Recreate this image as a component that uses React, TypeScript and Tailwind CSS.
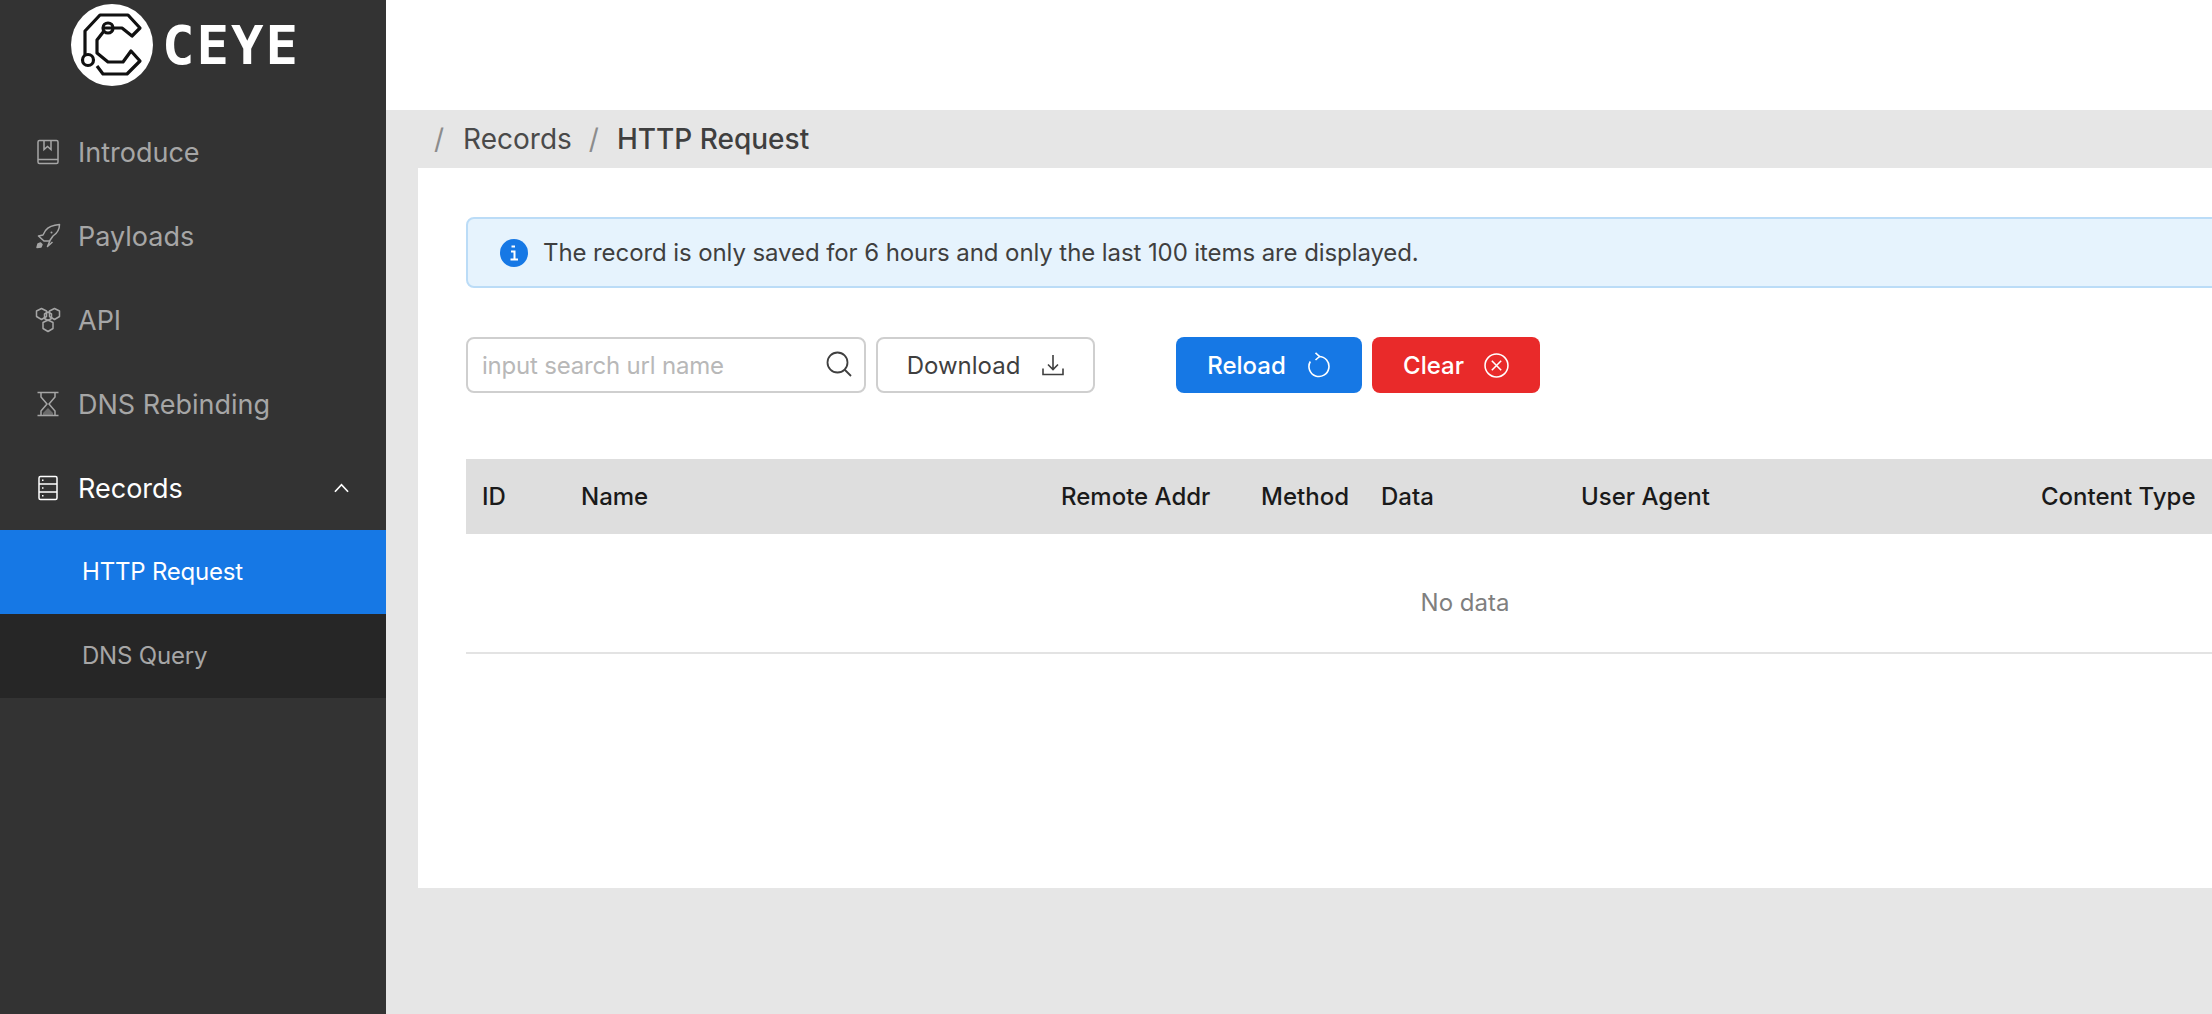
import { ReactNode } from "react";

const icon = "w-[26px] h-[26px] shrink-0";

function BookIcon() {
  return (
    <svg viewBox="0 0 26 26" className={icon} fill="none" stroke="currentColor" strokeWidth="1.5">
      <rect x="3" y="1.5" width="20" height="23" rx="1.5" />
      <path d="M3 20.5h20M9 1.5v9l3.5-3 3.5 3v-9" />
    </svg>
  );
}

function RocketIcon() {
  return (
    <svg viewBox="0 0 26 26" className={icon} fill="none" stroke="currentColor" strokeWidth="1.5" strokeLinejoin="round">
      <path d="M24.5 1.5C18 2 13.5 3.5 10.5 7.5L8 12 3.5 13l5.5 5 5.5 0 3.5-5C22.500 10 24.500 7 24.500 1.500Z" />
      <path d="M15 17.500 12.500 23.500 17.500 19" />
      <circle cx="16.500" cy="9.500" r="1" fill="currentColor" stroke="none" />
      <path d="M2 24.500l1-3.500 2.500-1 1.500 1.500-1 2.500Z" fill="currentColor" />
    </svg>
  );
}

function HexIcon() {
  return (
    <svg viewBox="0 0 26 26" className={icon} fill="none" stroke="currentColor" strokeWidth="1.500" strokeLinejoin="round">
      <path d="M6.500 1.500 11.500 4v5.500L6.500 12.500 1.500 9.500V4Z" />
      <path d="M19.500 1.500 24.500 4v5.500L19.500 12.500 14.500 9.500V4Z" />
      <path d="M13 13 18 15.500V21.500L13 24.500 8 21.500V15.500Z" />
      <path d="M13 5 16.500 7v4.500L13 13.500 9.500 11.500V7Z" />
    </svg>
  );
}

function HourglassIcon() {
  return (
    <svg viewBox="0 0 26 26" className={icon} fill="none" stroke="currentColor" strokeWidth="1.500">
      <path d="M2.500 1.500h21M2.500 24.500h21M6 1.500v4.500L12 13 6 20v4.500M20 1.500v4.500L14 13l6 7v4.500" />
      <path d="M8 22 13 17l5 5v2.500H8Z" fill="currentColor" fillOpacity="0.5" stroke="none" />
    </svg>
  );
}

function ServerIcon() {
  return (
    <svg viewBox="0 0 26 26" className={icon} fill="none" stroke="currentColor" strokeWidth="1.500">
      <rect x="4" y="1.500" width="18" height="23" rx="1.500" />
      <path d="M4 9h18M4 17h18" />
      <path d="M7 5.200h1.500M7 13h1.500M7 20.800h1.500" />
    </svg>
  );
}

function MenuItem({ label, children, active }: { label: string; children: ReactNode; active?: boolean }) {
  return (
    <div className={`flex items-center h-[84px] pl-[35px] text-[27px] ${active ? "text-white" : "text-[#a6a6a6]"}`}>
      {children}
      <span className="ml-[17px] pt-[2px]">{label}</span>
    </div>
  );
}

function Sidebar() {
  return (
    <aside className="w-[386px] shrink-0 bg-[#333333] flex flex-col">
      <div className="h-[110px] flex items-start pl-[71px] pt-[4px] gap-[9px]">
        <svg viewBox="0 0 82 82" className="w-[82px] h-[82px] shrink-0">
          <circle cx="41" cy="41" r="41" fill="#fff" />
          <g fill="none" stroke="#111" strokeWidth="3.200" strokeLinejoin="round">
            <path d="M33 24 H51 L61 32 69 24 57 11 H29 L14 27 V51" />
            <path d="M33 27 26 36 V49 L37 58 H52 L60 47 69 57 56 70 H32 L26 62" />
            <circle cx="37" cy="24" r="5" />
            <circle cx="17" cy="56" r="5.500" />
          </g>
        </svg>
        <span className="text-white text-[54px] leading-[84px] font-bold tracking-[2px] font-['DejaVu_Sans_Mono',monospace]">CEYE</span>
      </div>
      <MenuItem label="Introduce"><BookIcon /></MenuItem>
      <MenuItem label="Payloads"><RocketIcon /></MenuItem>
      <MenuItem label="API"><HexIcon /></MenuItem>
      <MenuItem label="DNS Rebinding"><HourglassIcon /></MenuItem>
      <div className="relative">
        <MenuItem label="Records" active><ServerIcon /></MenuItem>
        <svg viewBox="0 0 16 10" className="absolute left-[334px] top-[37px] w-[15px] h-[10px]" fill="none" stroke="#fff" strokeWidth="1.800">
          <path d="M1 9 8 1.500 15 9" />
        </svg>
      </div>
      <div className="h-[84px] flex items-center pl-[82px] bg-[#1678e5] text-white text-[24px] tracking-[-0.2px]">HTTP Request</div>
      <div className="h-[84px] flex items-center pl-[82px] bg-[#262626] text-[#a6a6a6] text-[24px] tracking-[-0.2px]">DNS Query</div>
    </aside>
  );
}

function Toolbar() {
  return (
    <div className="flex items-center mt-[49px] text-[24px]">
      <div className="relative w-[400px] h-[56px]">
        <input
          placeholder="input search url name"
          className="w-full h-full border-2 border-[#cfcfcf] rounded-[8px] pl-[14px] pr-[50px] pt-[1px] outline-none text-[24px] tracking-[-0.2px] placeholder:text-[#b8b8b8]"
        />
        <svg viewBox="0 0 26 26" className="absolute right-[14px] top-[14px] w-[26px] h-[26px]" fill="none" stroke="#3f3f3f" strokeWidth="1.800">
          <circle cx="11.500" cy="11.500" r="10" />
          <path d="M18.500 18.500 25 25" />
        </svg>
      </div>
      <button className="ml-[10px] w-[219px] h-[56px] border-2 border-[#cfcfcf] rounded-[8px] flex items-center justify-center gap-[22px] text-[#3f3f3f]">
        <span className="pt-[1px]">Download</span>
        <svg viewBox="0 0 22 22" className="w-[22px] h-[22px]" fill="none" stroke="#3f3f3f" strokeWidth="1.600">
          <path d="M11 1v14M6 10.500 11 15.500 16 10.500M1 14.500V20.500H21V14.500" />
        </svg>
      </button>
      <button className="ml-[81px] w-[186px] h-[56px] rounded-[8px] bg-[#1678e5] text-white font-medium flex items-center justify-center gap-[21px]">
        <span className="pt-[1px]">Reload</span>
        <svg viewBox="0 0 24 26" className="w-[24px] h-[26px]" fill="none" stroke="#fff" strokeWidth="1.600">
          <path d="M12 4.500a10 10 0 1 1-8.700 5" />
          <path d="M8.500 0.800 12.500 4.500 8.500 8" />
        </svg>
      </button>
      <button className="ml-[10px] w-[168px] h-[56px] rounded-[8px] bg-[#e92a2a] text-white font-medium flex items-center justify-center gap-[20px]">
        <span className="pt-[1px]">Clear</span>
        <svg viewBox="0 0 24 24" className="w-[25px] h-[25px]" fill="none" stroke="#fff" strokeWidth="1.500">
          <circle cx="12" cy="12" r="11" />
          <path d="M7.500 7.500 16.500 16.500M16.500 7.500 7.500 16.500" />
        </svg>
      </button>
    </div>
  );
}

const columns = ["ID", "Name", "Remote Addr", "Method", "Data", "User Agent", "Content Type"];

function RecordsTable() {
  return (
    <div className="w-[1998px] mt-[66px] text-[24px]">
      <div className="grid grid-cols-[99px_480px_200px_120px_200px_460px_1fr] h-[75px] items-center bg-[#dedede] font-medium text-[#1a1a1a]">
        {columns.map((c) => (
          <div key={c} className="pl-[16px] whitespace-nowrap">{c}</div>
        ))}
      </div>
      <div className="h-[120px] flex items-center justify-center pt-[19px] border-b-2 border-[#e3e3e3] text-[#7f7f7f]">No data</div>
    </div>
  );
}

export default function App() {
  return (
    <div className="flex w-[2212px] h-[1014px] overflow-hidden bg-[#e6e6e6] font-['Inter',sans-serif]">
      <Sidebar />
      <main className="flex-1 min-w-0 flex flex-col">
        <div className="h-[110px] bg-white shrink-0" />
        <div className="h-[58px] shrink-0 flex items-center pl-[48px] text-[28px] text-[#8c8c8c]">
          <span>/</span>
          <span className="ml-[19px] text-[#4a4a4a]">Records</span>
          <span className="ml-[17px]">/</span>
          <span className="ml-[18px] text-[#3f3f3f] font-medium">HTTP Request</span>
        </div>
        <div className="ml-[32px] h-[720px] shrink-0 bg-white pl-[48px] pt-[49px]">
          <div className="w-[1998px] h-[71px] flex items-center pl-[32px] gap-[15px] bg-[#e6f3fd] border-2 border-[#bbdcf7] rounded-[8px] text-[24px] tracking-[-0.09px] text-[#3f3f3f]">
            <svg viewBox="0 0 28 28" className="w-[28px] h-[28px] shrink-0">
              <circle cx="14" cy="14" r="14" fill="#1678e5" />
              <path d="M11.500 7.500h3.500M14 6.500v1M11 12.500h3.500V20M10.500 20.500h7.500" fill="none" stroke="#fff" strokeWidth="2" />
            </svg>
            The record is only saved for 6 hours and only the last 100 items are displayed.
          </div>
          <Toolbar />
          <RecordsTable />
        </div>
      </main>
    </div>
  );
}
